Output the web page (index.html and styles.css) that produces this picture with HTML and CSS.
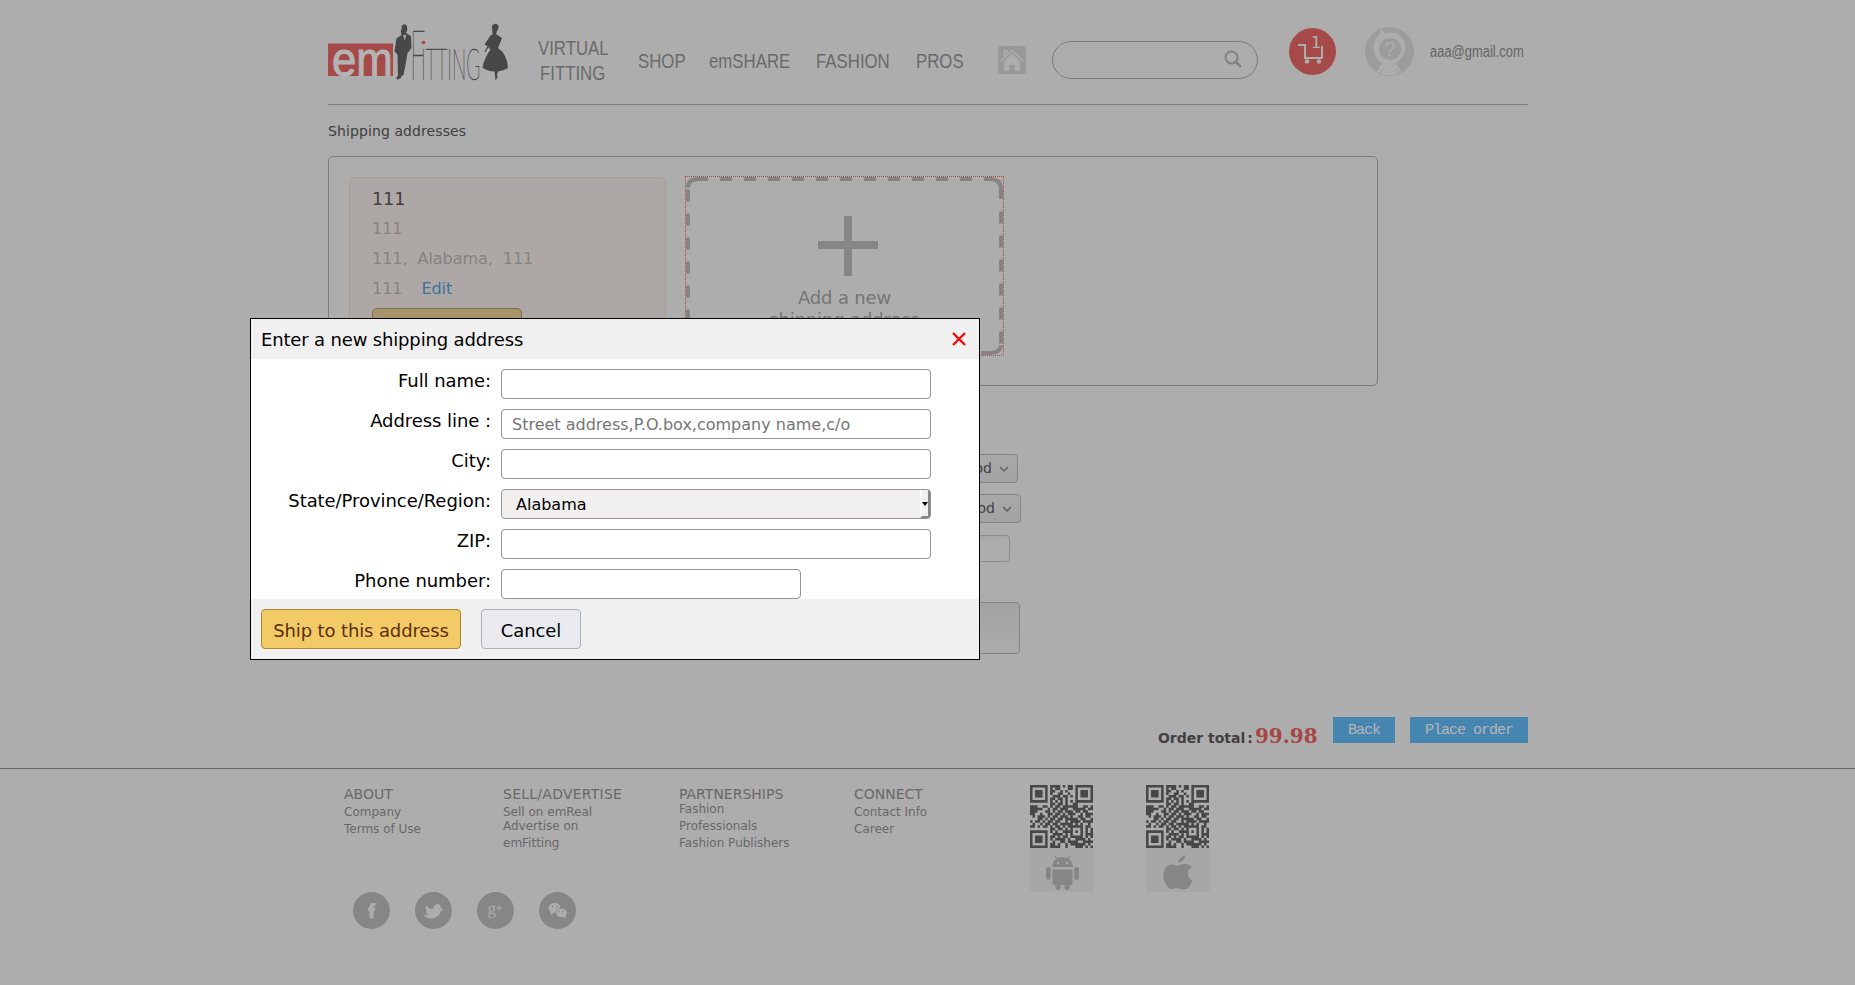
FILE: index.html
```html
<!DOCTYPE html>
<html lang="en">
<head>
<meta charset="utf-8">
<title>emFitting - Checkout</title>
<link rel="stylesheet" href="styles.css">
</head>
<body>
<header class="header wrap">
  <svg class="logo" width="182" height="62" viewBox="0 0 182 62">
    <rect x="0" y="20.500" width="65" height="32.500" fill="#a64a49"/>
    <text transform="translate(4 52.500) scale(.95 1)" font-size="48" class="logo-em" textLength="64" lengthAdjust="spacingAndGlyphs">em</text>
    <g fill="#474747">
      <path d="M73.500 3q3-3.500 5.500 0 1 4-1 7l5 3 .500 12-3 4-1 1-2 12-2 10-2 1-.500 2-3 1.500-2-1 2-3-.500-21-3-3 2-13 5-3.500q-1.500-4 .500-7z"/>
      <path d="M164 3q2.500-4 6-1 1.500 3-1 6l-1 3 6 4-4 10q9 6 10 20-5 3-10 3.500l-1 3 .500 3-2 3-1-9q-7 0-12-4 2-10 8-18l-4-4-2-1 6-9 2-1z"/>
    </g>
    <path d="M75.200 12l1.500 6 1.500-6z" fill="#adadad"/>
    <path d="M157 29l6-11" stroke="#474747" stroke-width="1.300"/>
    <text transform="translate(82 57) scale(.38 1)" font-size="71" class="logo-thin">F</text>
    <text transform="translate(93 57) scale(.45 1)" font-size="43" class="logo-thin" textLength="132" lengthAdjust="spacingAndGlyphs">ITTING</text>
    <circle cx="95.500" cy="19.500" r="1.800" fill="#b54442"/>
  </svg>
  <nav class="nav">
    <a class="n1"><span>VIRTUAL</span><span>FITTING</span></a><a class="n2"><span>SHOP</span></a><a class="n3"><span>emSHARE</span></a><a class="n4"><span>FASHION</span></a><a class="n5"><span>PROS</span></a>
  </nav>
  <svg class="home" width="28" height="28" viewBox="0 0 28 28">
    <rect width="28" height="28" rx="3.500" fill="#989898"/>
    <path d="M3 15L14 4.500 25 15M6.500 10V5H9v3" fill="none" stroke="#adadad" stroke-width="1.700"/>
    <path d="M6 15l8-7.500 8 7.500v9.500h-5.500V19h-5v5.500H6z" fill="#adadad"/>
  </svg>
  <div class="search">
    <svg width="18" height="18" viewBox="0 0 18 18" fill="none" stroke="#818181"><circle cx="7.500" cy="7.500" r="6" stroke-width="2"/><path d="M12 12l4 4" stroke-width="2.600" stroke-linecap="round"/></svg>
  </div>
  <div class="cart">
    <svg width="47" height="47" viewBox="0 0 47 47"><circle cx="23.500" cy="23.500" r="23.500" fill="#a64a49"/><path d="M9 17h7v13h17V18" fill="none" stroke="#adadad" stroke-width="2"/><circle cx="18" cy="33.500" r="2.200" fill="#adadad"/><circle cx="30" cy="33.500" r="2.200" fill="#adadad"/></svg>
    <span>1</span>
  </div>
  <svg class="avatar" width="49" height="49" viewBox="0 0 49 49">
    <circle cx="24.500" cy="24.500" r="24.500" fill="#9c9c9c"/>
    <path d="M16 2l4 4q14-3 19 8 4 11-4 19l-5 4q4 2 6 8-12 7-24 0 2-6 6-8-9-5-9.500-15T14 8z" fill="#adadad"/>
    <circle cx="25" cy="22" r="11" fill="#9c9c9c"/>
    <path d="M18 41l-2 6M32 41l2 6" stroke="#9c9c9c"/>
    <text x="25" y="29" text-anchor="middle" class="quest">?</text>
  </svg>
  <a class="email"><span>aaa@gmail.com</span></a>
</header>

<main class="wrap main">
  <h1 class="title">Shipping addresses</h1>
  <section class="addresses">
    <div class="card">
      <p class="name">111</p>
      <p>111</p>
      <p>111,&nbsp; Alabama,&nbsp; 111</p>
      <p>111 <a class="edit">Edit</a></p>
      <div class="card-btn"></div>
    </div>
    <div class="add">
      <svg class="dashes" width="317" height="178" viewBox="0 0 317 178" fill="none" stroke="#848484" stroke-width="4">
        <path d="M2 10.500Q2.500 2 12 2H22M298 2H305Q315 3 315 12V22M2 168Q2.500 176 12 176H22M295 176H305Q315 175 315 168.500"/>
        <path d="M34 2H294M34 176H294" stroke-dasharray="12 12"/>
        <path d="M2 12.500V168M315 34.500V167" stroke-dasharray="12 12"/>
      </svg>
      <svg class="plus" width="60" height="60" viewBox="0 0 60 60"><path d="M30 0V60M0 29H60" stroke="#868686" stroke-width="8"/></svg>
      <p>Add a new<br>shipping address</p>
    </div>
  </section>
  <section class="options">
    <div class="select s1">Select a payment method<svg width="10" height="6" viewBox="0 0 10 6"><path d="M1 1l4 4 4-4"/></svg></div>
    <div class="select s2">Select a delivery method<svg width="10" height="6" viewBox="0 0 10 6"><path d="M1 1l4 4 4-4"/></svg></div>
    <div class="field"></div>
    <div class="area"></div>
  </section>
  <div class="order">
    <b class="total">Order total<span>:</span></b><b class="price">99.98</b>
    <a class="btn">Back</a><a class="btn">Place order</a>
  </div>
</main>

<footer class="footer">
  <div class="wrap foot">
    <div class="col c1"><h2>ABOUT</h2><a>Company</a><a>Terms of Use</a></div>
    <div class="col c2"><h2>SELL/ADVERTISE</h2><a>Sell on emReal</a><a class="up">Advertise on<br>emFitting</a></div>
    <div class="col c3"><h2>PARTNERSHIPS</h2><a class="up">Fashion<br>Professionals</a><a>Fashion Publishers</a></div>
    <div class="col c4"><h2>CONNECT</h2><a>Contact Info</a><a>Career</a></div>
    <div class="app">
      <svg class="qr" width="63" height="63" viewBox="0 0 25 25"></svg>
      <div class="os"><svg width="33" height="36" viewBox="0 0 33 36" fill="#868686"><path d="M6 12Q7 2 16.500 2T27 12zM6.500 14.500h20V28q0 2-2 2h-16q-2 0-2-2zM9.500 29h5v4.500q-2.500 3-5 0zM18.500 29h5v4.500q-2.500 3-5 0z"/><rect x="0" y="12" width="4.800" height="13" rx="2.400"/><rect x="28.200" y="12" width="4.800" height="13" rx="2.400"/><path d="M9 1l3 4M24 1l-3 4" stroke="#868686" stroke-width="1.200"/><circle cx="12" cy="8" r="1.300" fill="#a7a7a7"/><circle cx="21" cy="8" r="1.300" fill="#a7a7a7"/></svg></div>
    </div>
    <div class="app">
      <svg class="qr" width="63" height="63" viewBox="0 0 25 25"></svg>
      <div class="os"><svg width="31" height="36" viewBox="0 0 31 36" fill="#868686"><path d="M15 8q0-5 7-8 .500 6-7 8zM15 11q6-3 10-1.500 3 1 4 3-5 3-4 8 1 4 4.500 5-3 7-6 8.500-3 1-7-.500-4-1-7 .500-3 1-6-3.500Q-2 22 2 13.500 6 7 15 11z"/></svg></div>
    </div>
  </div>
  <div class="wrap social">
    <svg width="37" height="37" viewBox="0 0 37 37"><circle cx="18.500" cy="18.500" r="18.500"/><path class="g" d="M16.500 26.500V19H15v-3.500h1.500q-.500-4.500 4-4.500H22.500v3h-1q-1.500 0-1 1.500h2l-.500 3.500h-1.500v7.500z"/></svg>
    <svg width="37" height="37" viewBox="0 0 37 37"><circle cx="18.500" cy="18.500" r="18.500"/><path class="g" d="M8 23q3 .500 5-1-2-.500-2.500-3h1.500Q10 17 11 13q3 4 7 4 0-3 4-5 2 0 3 1l1 3 2 2-2 1q-2 7-9 7.500-5.500 0-9-3.500z"/></svg>
    <svg width="37" height="37" viewBox="0 0 37 37"><circle cx="18.500" cy="18.500" r="18.500"/><text class="gp" x="10.500" y="22">g</text><path d="M19.500 16h5.500M22.200 13.200v5.500" stroke="#adadad" stroke-width="1.200"/></svg>
    <svg width="37" height="37" viewBox="0 0 37 37"><circle cx="18.500" cy="18.500" r="18.500"/><ellipse class="g" cx="15.500" cy="16" rx="6" ry="5"/><path class="g" d="M12 19l-1 4 4-2z"/><ellipse class="g" cx="22.500" cy="21" rx="5.700" ry="4.800" stroke="#868686"/><path class="g" d="M24 25l3 1.500-.500-3z"/><g class="eyes"><circle cx="13.500" cy="14.500" r=".8"/><circle cx="18" cy="14.500" r=".8"/><circle cx="20.500" cy="19.500" r=".7"/><circle cx="24.500" cy="19.500" r=".7"/></g></svg>
  </div>
</footer>

<div class="modal">
  <div class="modal-head"><span>Enter a new shipping address</span><svg width="14" height="14" viewBox="0 0 14 14"><path d="M1 1l12 12M13 1L1 13" stroke="#f00" stroke-width="2.200"/></svg></div>
  <div class="modal-body">
    <div class="row"><label>Full name:</label><input type="text"></div>
    <div class="row"><label>Address line :</label><input type="text" placeholder="Street address,P.O.box,company name,c/o"></div>
    <div class="row"><label>City:</label><input type="text"></div>
    <div class="row"><label>State/Province/Region:</label><div class="state"><span>Alabama</span><i></i></div></div>
    <div class="row"><label>ZIP:</label><input type="text"></div>
    <div class="row"><label>Phone number:</label><input type="text" class="short"></div>
  </div>
  <div class="modal-foot"><button class="ship">Ship to this address</button><button class="cancel">Cancel</button></div>
</div>
<script src="qr.js"></script>
</body>
</html>
```
FILE: styles.css
```css
* { box-sizing: border-box; }
body { margin: 0; height: 985px; overflow: hidden; background: #adadad; font-family: "DejaVu Sans", sans-serif; color: #404040; position: relative; }
p, h1, h2 { margin: 0; font-weight: normal; }
.wrap { width: 1200px; margin-left: 328px; }

.header { height: 105px; border-bottom: 1px solid #7c7c7c; display: flex; align-items: flex-start; font-family: "Liberation Sans", sans-serif; }
.logo { margin-top: 23px; flex: none; overflow: visible; }
.logo-em { font-family: "Liberation Sans", sans-serif; fill: #b4b4b4; stroke: #b4b4b4; stroke-width: 1; }
.logo-thin { font-family: Lato, sans-serif; font-weight: 100; fill: #474747; stroke: #474747; stroke-width: .5; }
.nav { display: flex; flex: none; width: 488px; color: #6a6a6a; font-size: 20px; line-height: 25px; padding-top: 49px; white-space: nowrap; }
.nav a { flex: none; }
.nav span, .email span { display: block; width: max-content; transform: scaleX(.84); transform-origin: 0 0; }
.n1 { width: 72px; margin: -13px 0 0 28px; }
.n1 span + span { margin-left: 2px; }
.n2 { margin-left: 28px; width: 47px; }
.n3 { margin-left: 24px; width: 79px; }
.n4 { margin-left: 28px; width: 72px; }
.n5 { margin-left: 28px; width: 47px; }
.home { margin-top: 46px; flex: none; }
.search { width: 206px; height: 38px; margin: 41px 0 0 26px; border: 1px solid #7c7c7c; border-radius: 19px; flex: none; padding: 8px 0 0 171px; }
.cart { position: relative; margin: 28px 0 0 31px; width: 47px; height: 47px; flex: none; }
.cart span { position: absolute; left: 22px; top: 5px; color: #b4b4b4; font: 16px/20px "DejaVu Sans", sans-serif; }
.avatar { margin: 27px 0 0 29px; flex: none; }
.quest { font: 20px "Liberation Sans", sans-serif; fill: #adadad; }
.email { margin: 42px 0 0 16px; font-size: 16px; line-height: 20px; color: #666; width: 94px; flex: none; }
.email span { transform: scaleX(.81); }

.title { font-size: 14px; line-height: 20px; padding-top: 16px; height: 51px; letter-spacing: .1px; }
.addresses { width: 1050px; height: 230px; border: 1px solid #7c7c7c; border-radius: 5px; display: flex; padding: 19px 20px; }
.card { width: 317px; height: 190px; margin-top: 1px; border: 1px solid #ac9f8f; border-radius: 5px; background: #ada8a5; padding: 6px 0 0 22px; font-size: 16px; line-height: 30px; letter-spacing: -.05px; color: #838383; }
.card .name { font-size: 17.500px; color: #404040; }
.edit { color: #3d709c; margin-left: 14px; }
.card-btn { width: 150px; height: 34px; margin-top: 4px; border: 1px solid #7b6b4b; border-radius: 5px; background: #a8956b; }
.add { width: 319px; height: 180px; margin-left: 19px; border: 1px dotted #b04848; position: relative; text-align: center; font-size: 18px; line-height: 22px; color: #757575; letter-spacing: -.15px; }
.dashes { position: absolute; left: 0; top: 0; }
.plus { display: block; margin: 39px 0 0 132px; }
.add p { padding-top: 11px; }

.options { height: 331px; padding-top: 68px; display: flex; flex-direction: column; align-items: flex-start; }
.select { height: 29px; border: 1px solid #848484; border-radius: 4px; background: linear-gradient(#a9a9a9, #a3a3a3); font-size: 14px; line-height: 26px; text-align: right; padding-right: 8px; white-space: nowrap; }
.select svg { margin-left: 7px; fill: none; stroke: #606060; stroke-width: 1.500; vertical-align: 1px; }
.s1 { width: 690px; }
.s2 { width: 693px; margin-top: 11px; }
.field { width: 682px; height: 27px; margin-top: 12px; border: 1px solid #8a8a8a; border-radius: 4px; background: linear-gradient(#a6a6a6, #adadad 6px); }
.area { width: 692px; height: 52px; margin-top: 40px; border: 1px solid #848484; border-radius: 4px; background: linear-gradient(#a3a3a3, #ababab); }

.order { height: 51px; display: flex; justify-content: flex-end; align-items: flex-start; }
.total { font-size: 14px; line-height: 20px; padding-top: 11px; width: 97px; white-space: nowrap; }
.total span { margin-left: 2px; }
.price { font: bold 20px/24px "DejaVu Serif", serif; color: #a64545; padding-top: 7px; width: 78px; }
.btn { height: 26px; padding: 1px 15px 0; background: #4785b1; color: #b5b5b5; font: 15px/26px "Liberation Mono", monospace; letter-spacing: -1px; margin-left: 15px; }
.price + .btn { margin-left: 0; }

.footer { border-top: 1px solid #696969; font-size: 12px; line-height: 17px; color: #686868; }
.foot { display: flex; height: 124px; padding: 17px 0 0 16px; }
.col h2 { font-size: 14px; line-height: 17px; height: 18px; }
.c2 h2 { letter-spacing: .25px; }
.col a { display: block; white-space: nowrap; }
.col .up { margin-top: -3px; }
.c1 { width: 159px; } .c2 { width: 176px; } .c3 { width: 175px; } .c4 { width: 176px; }
.app { width: 64px; margin: -1px 52px 0 0; }
.qr { display: block; fill: #474747; }
.os { height: 44px; width: 64px; background: #a7a7a7; display: flex; justify-content: center; padding-top: 7px; }
.social { display: flex; gap: 25px; padding-left: 25px; margin-top: -1px; }
.social svg { fill: #868686; }
.social .g { fill: #adadad; }
.social .gp { fill: #adadad; font: 17px "Liberation Serif", serif; }

.modal { position: absolute; left: 250px; top: 318px; width: 730px; height: 342px; border: 1px solid #000; background: #fff; color: #000; font-size: 18px; }
.modal-head { height: 40px; background: #f0f0f0; display: flex; justify-content: space-between; align-items: center; padding: 0 13px 0 10px; line-height: 40px; letter-spacing: -.16px; }
.modal-head span { padding-top: 2px; }
.modal-body { height: 240px; padding-top: 10px; }
.row { display: flex; height: 40px; }
.row label { width: 240px; margin-right: 10px; text-align: right; line-height: 24px; letter-spacing: -.06px; }
.row input, .state { width: 430px; height: 30px; border: 1px solid #949494; border-radius: 4px; padding: 0 10px; font: 16px "DejaVu Sans", sans-serif; background: #fff; margin: 0; }
.row .short { width: 300px; }
.row input::placeholder { color: #757575; }
.row .state { background: #f1f0ef; padding: 0 0 0 14px; line-height: 29px; display: flex; justify-content: space-between; overflow: hidden; }
.state i { width: 10px; height: 28px; border: solid #858583; border-width: 0 2px 2px 0; border-left: 2px solid #fff; position: relative; }
.state i::after { content: ""; position: absolute; left: 0; top: 12px; border: 3px solid transparent; border-top: 4px solid #000; border-bottom: 0; }
.modal-foot { height: 60px; background: #f0f0f0; padding: 10px; display: flex; gap: 20px; }
.modal-foot button { height: 40px; border-radius: 4px; padding: 2px 0 0; font: 18px "DejaVu Sans", sans-serif; letter-spacing: -.12px; }
.ship { width: 200px; background: #f3cb66; border: 1px solid #a88734; color: #5c2e12; }
.cancel { width: 100px; background: #e8eaef; border: 1px solid #adb1b8; color: #000; }
```
FILE: qr.js
```js
const rows = [
  "1111111011110101101111111",
  "1000001010110001101000001",
  "1011101011001010001011101",
  "1011101010011001001011101",
  "1011101001110110101011101",
  "1000001011011010001000001",
  "1111111010101010101111111",
  "0000000011011010011000000",
  "1110011010110111111001101",
  "1111100101101110011111011",
  "1110001101011011101101100",
  "1100100110110101110010111",
  "0101110101101110100110110",
  "0001101011011011111011001",
  "1011010110110010111101111",
  "0100101101101111101010010",
  "1101011010110101111110110",
  "0000000011011010100010101",
  "1111111010100111101010101",
  "1000001001111010100010111",
  "1011101011010110111110101",
  "1011101010111101001111010",
  "1011101001001101111001111",
  "1000001011010010111111010",
  "1111111011110010001110101"
];
// One horizontal run per group of dark modules
const path = rows.map((row, y) =>
  [...row.matchAll(/1+/g)].map(m => `M${m.index} ${y}h${m[0].length}v1h-${m[0].length}z`).join("")
).join("");
document.querySelectorAll(".qr").forEach(svg => {
  const p = document.createElementNS("http://www.w3.org/2000/svg", "path");
  p.setAttribute("d", path);
  svg.appendChild(p);
});
```
